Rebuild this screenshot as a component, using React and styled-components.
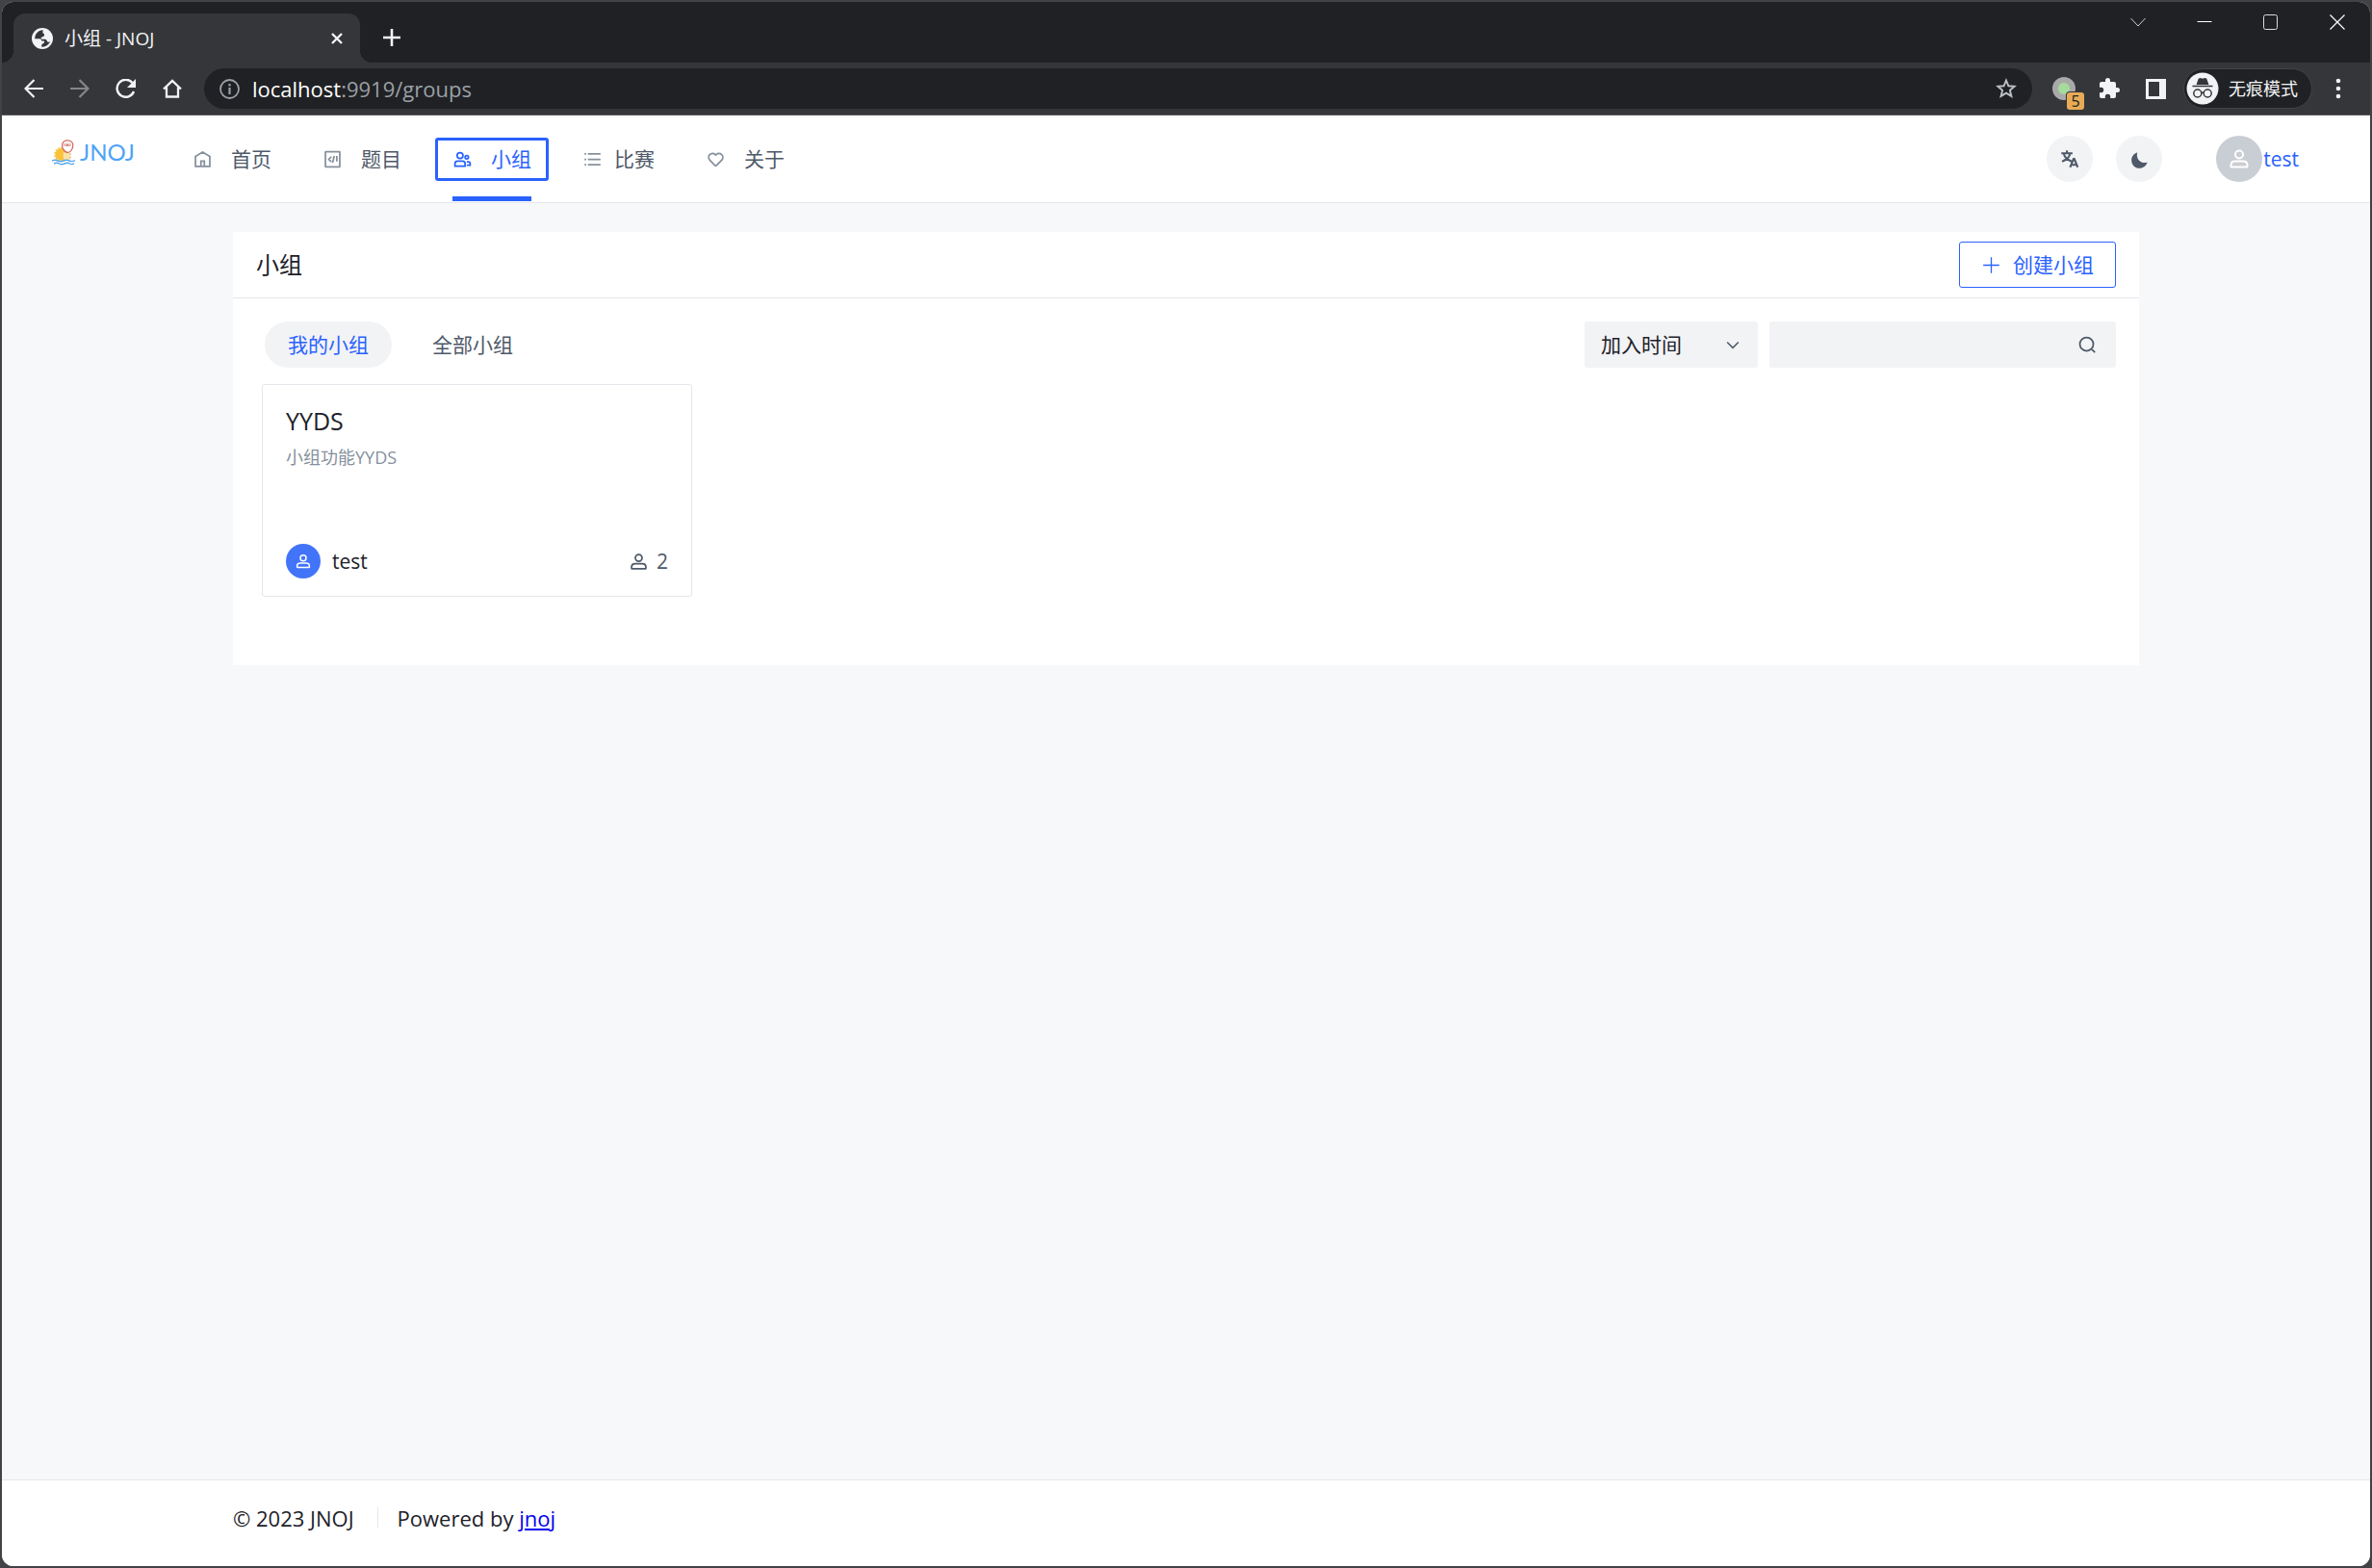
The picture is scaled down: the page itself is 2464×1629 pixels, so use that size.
import React from 'react'
import styled, { createGlobalStyle } from 'styled-components'

const GlobalStyle = createGlobalStyle`
  * {
    box-sizing: border-box;
  }

  body {
    margin: 0;
    background: #424347;
    color: #1d2129;
    font-family: 'Open Sans', 'Noto Sans CJK SC', sans-serif;
    font-size: 21px;
    line-height: 32px;
  }

  button, input, select {
    margin: 0;
    padding: 0;
    border: 0;
    background: none;
    color: inherit;
    font: inherit;
  }
`;

// stroked 48 grid icons used all over the site
const Icon = ({ size = 21, children }) => (
  <svg width={size} height={size} viewBox='0 0 48 48' fill='none' stroke='currentColor' strokeWidth='4' aria-hidden='true'>
    {children}
  </svg>
)

const UserIcon = ({ size }) => (
  <Icon size={size}>
    <path d='M7 37c0-4.97 4.03-8 9-8h16c4.97 0 9 3.03 9 8v3a1 1 0 0 1-1 1H8a1 1 0 0 1-1-1v-3Z' />
    <circle cx='24' cy='15' r='8' />
  </Icon>
)

const navItems = [
  {
    label: '首页',
    icon: <path d='M7 17 24 7l17 10v24H7V17Zm13 11h8v13h-8V28Z' />
  },
  {
    label: '题目',
    icon: <path d='M8 6h32a1 1 0 0 1 1 1v34a1 1 0 0 1-1 1H8a1 1 0 0 1-1-1V7a1 1 0 0 1 1-1ZM21 18l-6 6 6 6M28 16l-4 16M34 16v13' />
  },
  {
    label: '小组',
    active: true,
    icon: (
      <>
        <circle cx='18' cy='15' r='7' />
        <circle cx='34' cy='19' r='4' />
        <path d='M6 34a6 6 0 0 1 6-6h12a6 6 0 0 1 6 6v6H6v-6ZM34 30h4a4 4 0 0 1 4 4v4h-8' />
      </>
    )
  },
  {
    label: '比赛',
    tight: true,
    icon: <path d='M13 24h30M5 11h4m4 26h30M13 11h30M5 24h4M5 37h4' />
  },
  {
    label: '关于',
    icon: <path d='M38.083 12.912a9.17 9.17 0 0 1 .177 12.966l-.177.18L25.76 38.39c-.981.98-2.562.997-3.576.022l-.08-.078L9.917 26.058A9.17 9.17 0 0 1 9.74 13.092l.177-.18a9.17 9.17 0 0 1 12.905-.18l.18.18L24 13.91l.998-.998c3.615-3.615 9.47-3.615 13.085 0Z' />
  }
]

const TitleBar = () => (
  <TabStrip>
    <Tab>
      <svg width='22' height='22' viewBox='0 0 24 24' fill='#f1f3f4' aria-hidden='true'>
        <circle cx='12' cy='12' r='12' />
        <path d='M13 2.500c-3.500 0-6.500 1.600-8.300 4.600-.9 1.600-1.300 3.300-1.200 5.200h5.200c1.800 0 2.400 1 2.400 2.500h2.500c1 0 1.200 2-.3 2.600-1.800.5-2.300 1.500-2.300 4 4.500.4 8.300-1.900 9.800-6-1.500 1.200-3 .8-3.600-.7-.4-1.200-1.200-1.800-2.800-1.800h-3c-1 0-1.400-2 0-2.500 1.600-.4 3-1 2.800-2.800-.1-1.300-1.600-1-1.800-2.300-.1-1.200.2-2 .6-2.800z' fill='#35363a' />
      </svg>
      <TabTitle>小组 - JNOJ</TabTitle>
      <ChromeButton aria-label='Close tab' $size={20}>
        <svg width='14' height='14' viewBox='0 0 14 14'><path d='M2 2l10 10M12 2 2 12' stroke='#f1f3f4' strokeWidth='2.400' /></svg>
      </ChromeButton>
    </Tab>
    <NewTab aria-label='New tab' $size={36}>
      <svg width='18' height='18' viewBox='0 0 18 18'><path d='M9 0v18M0 9h18' stroke='#f1f3f4' strokeWidth='2.600' /></svg>
    </NewTab>
    <WindowControls>
      <ChromeButton aria-label='Search tabs' $size={69}>
        <svg width='16' height='16' viewBox='0 0 16 16'><path d='m.5 4 7.500 8 7.500-8' stroke='#cfd0d2' fill='none' /></svg>
      </ChromeButton>
      <ChromeButton aria-label='Minimize' $size={69}>
        <svg width='16' height='16' viewBox='0 0 16 16'><path d='M.5 7.500h15' stroke='#fff' /></svg>
      </ChromeButton>
      <ChromeButton aria-label='Maximize' $size={69}>
        <svg width='16' height='16' viewBox='0 0 16 16'><rect x='.5' y='.5' width='14' height='15' rx='2' stroke='#dcdcde' fill='none' /></svg>
      </ChromeButton>
      <ChromeButton aria-label='Close' $size={69}>
        <svg width='16' height='16' viewBox='0 0 16 16'><path d='m.5.5 15 15m0-15-15 15' stroke='#fff' strokeWidth='1.200' /></svg>
      </ChromeButton>
    </WindowControls>
  </TabStrip>
)

const AddressBar = () => (
  <Toolbar>
    <ChromeButton aria-label='Back' $size={36}>
      <svg width='20' height='20' viewBox='0 0 20 20'><path d='M20 10H2M10.500 1 1.500 10l9 9' stroke='#f1f3f4' strokeWidth='2.200' fill='none' /></svg>
    </ChromeButton>
    <ChromeButton aria-label='Forward' $size={36}>
      <svg width='20' height='20' viewBox='0 0 20 20'><path d='M0 10h18M9.500 1l9 9-9 9' stroke='#85868a' strokeWidth='2.200' fill='none' /></svg>
    </ChromeButton>
    <ChromeButton aria-label='Reload' $size={36}>
      <svg width='22' height='20' viewBox='0 0 22 20'>
        <path d='M17.500 4A9 9 0 1 0 19 13' stroke='#f1f3f4' strokeWidth='2.400' fill='none' />
        <path d='M21 0v9h-9z' fill='#f1f3f4' />
      </svg>
    </ChromeButton>
    <ChromeButton aria-label='Home' $size={36}>
      <svg width='20' height='20' viewBox='0 0 20 20'><path d='M1 10.500 10 1.800l9 8.700M4 8.500v10h3.500M16 8.500v10h-3.500M4 18.500h12' stroke='#f1f3f4' strokeWidth='2.300' fill='none' /></svg>
    </ChromeButton>
    <Omnibox>
      <svg width='21' height='21' viewBox='0 0 21 21' aria-hidden='true'>
        <circle cx='10.500' cy='10.500' r='9.500' fill='none' stroke='#9aa0a6' strokeWidth='1.800' />
        <path d='M10.500 9v7M10.500 5v2.400' stroke='#9aa0a6' strokeWidth='2.200' />
      </svg>
      <Url><b>localhost</b>:9919/groups</Url>
      <svg width='22' height='22' viewBox='0 0 22 22' aria-hidden='true'>
        <path d='m11 2.500 2.400 5.800 6.200.5-4.700 4 1.500 6.100-5.400-3.300-5.400 3.300 1.500-6.100-4.700-4 6.200-.5z' fill='none' stroke='#bdc1c6' strokeWidth='1.900' />
      </svg>
    </Omnibox>
    <Extension>
      <svg width='24' height='24' viewBox='0 0 24 24' aria-hidden='true'>
        <circle cx='12' cy='12' r='12' fill='#a9a9a9' />
        <circle cx='12' cy='12' r='6' fill='#a5dc9c' />
      </svg>
      <ExtensionBadge>5</ExtensionBadge>
    </Extension>
    <ChromeButton aria-label='Extensions' $size={36}>
      <svg width='24' height='24' viewBox='0 0 24 24' fill='#f1f3f4'>
        <path d='M20.500 11H19V7c0-1.100-.9-2-2-2h-4V3.500a2.500 2.500 0 0 0-5 0V5H4c-1.100 0-2 .9-2 2v3.800h1.500a2.700 2.700 0 0 1 0 5.400H2V20c0 1.100.9 2 2 2h3.800v-1.500a2.700 2.700 0 0 1 5.400 0V22H17c1.100 0 2-.9 2-2v-4h1.500a2.500 2.500 0 0 0 0-5z' />
      </svg>
    </ChromeButton>
    <PanelButton aria-label='Side panel' $size={36}>
      <svg width='21' height='21' viewBox='0 0 21 21'>
        <path d='M0 0h21v21H0z' fill='#f1f3f4' />
        <path d='M3 3h11v15H3z' fill='#35363a' />
      </svg>
    </PanelButton>
    <Incognito>
      <svg width='34' height='34' viewBox='0 0 34 34' aria-hidden='true'>
        <circle cx='17' cy='17' r='16.500' fill='#f1f3f4' />
        <path d='M6.500 14.500h21' stroke='#35363a' strokeWidth='1.400' />
        <path d='m10.500 13 2.300-6.500 2.200-.5 2 .8 2-.8 2.200.5 2.300 6.500z' fill='#35363a' />
        <circle cx='11.800' cy='22' r='4' fill='none' stroke='#35363a' strokeWidth='1.500' />
        <circle cx='22.200' cy='22' r='4' fill='none' stroke='#35363a' strokeWidth='1.500' />
        <path d='M15.800 21.500q1.200-1 2.400 0' fill='none' stroke='#35363a' strokeWidth='1.500' />
      </svg>
      无痕模式
    </Incognito>
    <MenuButton aria-label='Menu' $size={36}>
      <svg width='6' height='22' viewBox='0 0 6 22' fill='#f1f3f4'>
        <circle cx='3' cy='3' r='2.300' /><circle cx='3' cy='11' r='2.300' /><circle cx='3' cy='19' r='2.300' />
      </svg>
    </MenuButton>
  </Toolbar>
)

const Logo = () => (
  <LogoLink href='#home'>
    <svg width='25' height='27' viewBox='0 0 25 27' fill='none' aria-hidden='true'>
      <circle cx='10' cy='15.500' r='6.500' fill='#f9c23c' />
      <circle cx='10' cy='15.500' r='7' stroke='#f9c23c' strokeWidth='1.500' strokeDasharray='2 1.200' />
      <path d='M12 13q3 1.500 7 1v7q-4 1-6 0t-1-8z' fill='#fbe3a4' />
      <path d='M16 .8c4 0 6 2.200 5.800 5.600-.2 3.600-2.600 7-5.300 7S10.600 10 10.600 6.400C10.500 3 12.500.8 16 .8z' fill='#fff' stroke='#d0605a' strokeWidth='1.200' />
      <path d='M13 4v3M15 4v3l1-2 1 2V4M19 4v3' stroke='#d0605a' strokeWidth='.8' />
      <path d='M19 14v7' stroke='#e89a90' strokeDasharray='2 1.500' />
      <path d='M0 22q3-1.500 6 0t6 0 6 0 6-.5M2 25q3-1.500 5.500 0t5.500 0 5.500 0 4.500-.5' stroke='#55a8ee' strokeWidth='1.400' />
    </svg>
    JNOJ
  </LogoLink>
)

const SiteHeader = () => (
  <Header>
    <Logo />
    <Nav>
      {navItems.map(item => (
        <NavLink key={item.label} href='#nav' $active={item.active} $tight={item.tight}>
          <Icon>{item.icon}</Icon>
          {item.label}
        </NavLink>
      ))}
    </Nav>
    <HeaderActions>
      <RoundButton aria-label='Language'>
        <Icon size={20}>
          <path d='m44 45-2.600-6M25 45l2.600-6m13.800 0L35.500 24h-2L27.600 39m13.800 0H27.600M17 3v7M3 10h28M9 11s2 8 7 12 13 8 13 8M25 11s-2 8-7 12S5 31 5 31' strokeWidth='5' />
        </Icon>
      </RoundButton>
      <RoundButton aria-label='Dark mode'>
        <Icon>
          <path d='M42.108 29.769c.124-.387-.258-.736-.645-.613A17.990 17.990 0 0 1 36 30c-9.941 0-18-8.059-18-18 0-1.904.296-3.740.844-5.463.123-.387-.226-.768-.613-.645C10.558 8.334 5 15.518 5 24c0 10.493 8.507 19 19 19 8.482 0 15.666-5.558 18.108-13.231Z' fill='currentColor' stroke='none' transform='translate(0 2)' />
        </Icon>
      </RoundButton>
      <UserLink href='#user'>
        <Avatar $size={48} $color='#c9cdd4'><UserIcon size={24} /></Avatar>
        test
      </UserLink>
    </HeaderActions>
  </Header>
)

const GroupCard = ({ name, description, owner, members }) => (
  <Card>
    <CardTitle>{name}</CardTitle>
    <CardText>{description}</CardText>
    <CardFooter>
      <Avatar $size={36} $color='#4274f9'><UserIcon size={18} /></Avatar>
      <Owner>{owner}</Owner>
      <Members><UserIcon /> {members}</Members>
    </CardFooter>
  </Card>
)

const App = () => (
  <>
    <GlobalStyle />
    <Window>
      <TitleBar />
      <AddressBar />
      <SiteHeader />
      <Main>
        <Panel>
          <PanelHeader>
            <h1>小组</h1>
            <CreateButton>
              <Icon><path d='M5 24h38M24 5v38' strokeWidth='3' /></Icon>
              创建小组
            </CreateButton>
          </PanelHeader>
          <Filters>
            <Pill $active>我的小组</Pill>
            <Pill>全部小组</Pill>
            <SelectBox>
              <select aria-label='排序' defaultValue='join'>
                <option value='join'>加入时间</option>
              </select>
              <Icon size={18}><path d='M39.600 17.443 24.043 33 8.487 17.443' /></Icon>
            </SelectBox>
            <SearchBox>
              <input type='text' aria-label='搜索' />
              <Icon>
                <path d='M33.072 33.071c6.248-6.248 6.248-16.379 0-22.627-6.249-6.249-16.380-6.249-22.628 0-6.248 6.248-6.248 16.379 0 22.627 6.248 6.248 16.380 6.248 22.628 0Zm0 0 8.485 8.485' />
              </Icon>
            </SearchBox>
          </Filters>
          <Cards>
            <GroupCard name='YYDS' description='小组功能YYDS' owner='test' members={2} />
          </Cards>
        </Panel>
      </Main>
      <Footer>
        <span>© 2023 JNOJ</span>
        <FooterDivider />
        <span>Powered by <a href='#jnoj'>jnoj</a></span>
      </Footer>
    </Window>
  </>
)

const Window = styled.div`
  display: flex;
  flex-direction: column;
  min-height: 100vh;
  border: 2px solid #424347;
  border-radius: 14px;
  overflow: hidden;
  background: #f7f8fa;
`;

const TabStrip = styled.div`
  display: flex;
  align-items: flex-end;
  height: 63px;
  padding-left: 12px;
  background: #202124;
`;

const Tab = styled.div`
  position: relative;
  display: flex;
  align-items: center;
  width: 360px;
  height: 51px;
  padding: 0 14px 0 19px;
  border-radius: 12px 12px 0 0;
  background: #35363a;

  /* flared feet of the tab */
  &::before, &::after {
    content: '';
    position: absolute;
    bottom: 0;
    width: 12px;
    height: 12px;
  }

  &::before {
    right: 100%;
    background: radial-gradient(circle at 0 0, #202124 12px, #35363a 12px);
  }

  &::after {
    left: 100%;
    background: radial-gradient(circle at 100% 0, #202124 12px, #35363a 12px);
  }
`;

const TabTitle = styled.span`
  flex: 1;
  margin-left: 12px;
  color: #f1f3f4;
  font-size: 19px;
`;

const ChromeButton = styled.button`
  display: flex;
  align-items: center;
  justify-content: center;
  flex: none;
  width: ${props => props.$size}px;
  height: 42px;
`;

const NewTab = styled(ChromeButton)`
  margin: 0 auto 5px 15px;
`;

const WindowControls = styled.div`
  display: flex;
  align-self: flex-start;
`;

const Toolbar = styled.div`
  display: flex;
  align-items: center;
  gap: 12px;
  height: 55px;
  padding: 0 15px;
  border-bottom: 1px solid #5c5d60;
  background: #35363a;
`;

const Omnibox = styled.div`
  display: flex;
  align-items: center;
  flex: 1;
  height: 42px;
  margin: 0 5px 0 3px;
  padding: 0 16px;
  border-radius: 21px;
  background: #202124;
`;

const Url = styled.span`
  flex: 1;
  margin-left: 13px;
  color: #9aa0a6;
  font-size: 22px;

  b {
    color: #fff;
    font-weight: 400;
  }
`;

const Extension = styled.div`
  position: relative;
  width: 36px;
  height: 36px;
  margin-right: -3px;
  padding: 6px 4px;

  svg {
    display: block;
  }
`;

const ExtensionBadge = styled.span`
  position: absolute;
  right: -1px;
  bottom: -4px;
  width: 18px;
  border-radius: 3px;
  background: #e8ab55;
  box-shadow: 0 0 0 1px #35363a;
  color: #202124;
  font-size: 16px;
  line-height: 18px;
  text-align: center;
`;

const PanelButton = styled(ChromeButton)`
  margin-right: -1px;
`;

const MenuButton = styled(ChromeButton)`
  margin-left: -3px;
`;

const Incognito = styled.div`
  display: flex;
  align-items: center;
  gap: 10px;
  height: 42px;
  padding: 0 14px 0 2px;
  border: 1px solid #424347;
  border-radius: 21px;
  background: #202124;
  color: #f1f3f4;
  font-size: 18px;
`;

const Header = styled.header`
  display: flex;
  align-items: center;
  height: 91px;
  padding: 0 74px 0 52px;
  border-bottom: 1px solid #e5e6eb;
  background: #fff;
`;

const LogoLink = styled.a`
  display: flex;
  align-items: center;
  gap: 4px;
  margin-bottom: 14px;
  color: #4ea3f7;
  font-family: 'Lato', sans-serif;
  font-size: 24px;
  text-decoration: none;
`;

const Nav = styled.nav`
  display: flex;
  gap: 17px;
  margin-left: 42px;
`;

const NavLink = styled.a`
  position: relative;
  display: flex;
  align-items: center;
  gap: ${props => props.$tight ? 12 : 19}px;
  height: 45px;
  padding: 0 15px;
  border: 3px solid ${props => props.$active ? '#2a62ff' : 'transparent'};
  border-radius: 3px;
  color: ${props => props.$active ? '#2a62ff' : '#4e5969'};
  text-decoration: none;

  svg {
    color: ${props => props.$active ? '#2a62ff' : '#86909c'};
  }

  &::after {
    content: '';
    display: ${props => props.$active ? 'block' : 'none'};
    position: absolute;
    right: 15px;
    bottom: -24px;
    left: 15px;
    height: 5px;
    background: #2a62ff;
  }
`;

const HeaderActions = styled.div`
  display: flex;
  align-items: center;
  gap: 24px;
  margin-left: auto;
`;

const RoundButton = styled.button`
  display: flex;
  align-items: center;
  justify-content: center;
  width: 48px;
  height: 48px;
  border-radius: 50%;
  background: #f2f3f5;
  color: #4e5969;
`;

const UserLink = styled.a`
  display: flex;
  align-items: center;
  gap: 1px;
  margin-left: 32px;
  color: #2a62ff;
  text-decoration: none;
`;

const Avatar = styled.span`
  display: flex;
  align-items: center;
  justify-content: center;
  width: ${props => props.$size}px;
  height: ${props => props.$size}px;
  border-radius: 50%;
  background: ${props => props.$color};
  color: #fff;
`;

const Main = styled.main`
  flex: 1;
  padding: 30px 240px;
`;

const Panel = styled.section`
  padding-bottom: 71px;
  background: #fff;
`;

const PanelHeader = styled.div`
  display: flex;
  align-items: center;
  justify-content: space-between;
  height: 69px;
  padding: 0 24px;
  border-bottom: 1px solid #e5e6eb;

  h1 {
    margin: 0;
    font-size: 24px;
    font-weight: 400;
  }
`;

const CreateButton = styled.button`
  display: flex;
  align-items: center;
  gap: 12px;
  height: 48px;
  padding: 0 22px;
  border: 1px solid #2a62ff;
  border-radius: 3px;
  color: #2a62ff;
`;

const Filters = styled.div`
  display: flex;
  align-items: center;
  gap: 12px;
  padding: 24px 24px 17px 33px;
`;

const Pill = styled.button`
  height: 48px;
  margin-right: 6px;
  padding: 0 24px;
  border-radius: 24px;
  background: ${props => props.$active ? '#f2f3f5' : 'transparent'};
  color: ${props => props.$active ? '#2a62ff' : '#4e5969'};
`;

const SelectBox = styled.div`
  display: flex;
  align-items: center;
  width: 180px;
  height: 48px;
  margin-left: auto;
  padding: 0 17px;
  border-radius: 3px;
  background: #f2f3f5;
  color: #4e5969;

  select {
    flex: 1;
    min-width: 0;
    appearance: none;
    color: #1d2129;
  }
`;

const SearchBox = styled.div`
  display: flex;
  align-items: center;
  width: 360px;
  height: 48px;
  padding: 0 19px;
  border-radius: 3px;
  background: #f2f3f5;
  color: #4e5969;

  input {
    flex: 1;
    min-width: 0;
    outline: 0;
  }
`;

const Cards = styled.div`
  display: grid;
  grid-template-columns: repeat(auto-fill, minmax(440px, 1fr));
  gap: 44px;
  padding: 0 30px;
`;

const Card = styled.article`
  display: flex;
  flex-direction: column;
  height: 221px;
  padding: 19px 24px 18px;
  border: 1px solid #e5e6eb;
  border-radius: 3px;
`;

const CardTitle = styled.h2`
  margin: 0;
  font-size: 25px;
  font-weight: 400;
  line-height: 36px;
`;

const CardText = styled.p`
  margin: 7px 0 0;
  color: #86909c;
  font-size: 18px;
  line-height: 27px;
`;

const CardFooter = styled.div`
  display: flex;
  align-items: center;
  margin-top: auto;
`;

const Owner = styled.span`
  margin-left: 12px;
`;

const Members = styled.span`
  display: flex;
  align-items: center;
  gap: 8px;
  margin-left: auto;
  color: #4e5969;
`;

const Footer = styled.footer`
  display: flex;
  align-items: center;
  height: 90px;
  padding: 0 240px 12px;
  border-top: 1px solid #e5e6eb;
  background: #fff;
  font-size: 22px;

  a {
    color: #0000ee;
  }
`;

const FooterDivider = styled.i`
  width: 1px;
  height: 21px;
  margin: 0 20px 0 24px;
  background: #e5e6eb;
`;

export default App
